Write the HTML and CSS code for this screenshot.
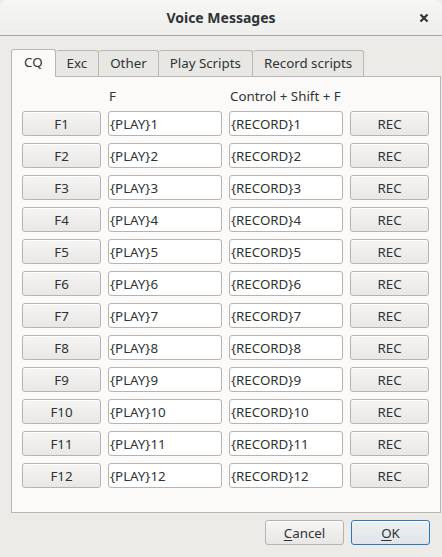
FILE: index.html
```html
<!DOCTYPE html>
<html>
<head>
<meta charset="utf-8">
<link rel="stylesheet" href="styles.css">
</head>
<body>
<div class="window">
  <div class="titlebar">
    <span class="title">Voice Messages</span>
    <svg class="close" width="10" height="10" viewBox="0 0 10 10"><path d="M1.5 1.5 L8.5 8.5 M8.5 1.5 L1.5 8.5" stroke="#2e3436" stroke-width="2.2" stroke-linecap="butt"/></svg>
  </div>
  <div class="content">
    <div class="tabs">
      <div class="tab active">CQ</div>
      <div class="tab">Exc</div>
      <div class="tab">Other</div>
      <div class="tab">Play Scripts</div>
      <div class="tab">Record scripts</div>
    </div>
    <div class="panel">
      <div class="grid">
        <div class="head"></div>
        <div class="head">F</div>
        <div class="head">Control + Shift + F</div>
        <div class="head"></div>

        <button class="btn">F1</button><div class="entry">{PLAY}1</div><div class="entry">{RECORD}1</div><button class="btn">REC</button>
        <button class="btn">F2</button><div class="entry">{PLAY}2</div><div class="entry">{RECORD}2</div><button class="btn">REC</button>
        <button class="btn">F3</button><div class="entry">{PLAY}3</div><div class="entry">{RECORD}3</div><button class="btn">REC</button>
        <button class="btn">F4</button><div class="entry">{PLAY}4</div><div class="entry">{RECORD}4</div><button class="btn">REC</button>
        <button class="btn">F5</button><div class="entry">{PLAY}5</div><div class="entry">{RECORD}5</div><button class="btn">REC</button>
        <button class="btn">F6</button><div class="entry">{PLAY}6</div><div class="entry">{RECORD}6</div><button class="btn">REC</button>
        <button class="btn">F7</button><div class="entry">{PLAY}7</div><div class="entry">{RECORD}7</div><button class="btn">REC</button>
        <button class="btn">F8</button><div class="entry">{PLAY}8</div><div class="entry">{RECORD}8</div><button class="btn">REC</button>
        <button class="btn">F9</button><div class="entry">{PLAY}9</div><div class="entry">{RECORD}9</div><button class="btn">REC</button>
        <button class="btn">F10</button><div class="entry">{PLAY}10</div><div class="entry">{RECORD}10</div><button class="btn">REC</button>
        <button class="btn">F11</button><div class="entry">{PLAY}11</div><div class="entry">{RECORD}11</div><button class="btn">REC</button>
        <button class="btn">F12</button><div class="entry">{PLAY}12</div><div class="entry">{RECORD}12</div><button class="btn">REC</button>
      </div>
    </div>
    <div class="actions">
      <button class="btn"><u>C</u>ancel</button>
      <button class="btn ok"><u>O</u>K</button>
    </div>
  </div>
</div>
</body>
</html>
```

FILE: styles.css
```css
* { box-sizing: border-box; }
html, body {
  margin: 0;
  padding: 0;
  background: #edebe8;
}
body {
  font-family: "Noto Sans", sans-serif;
  font-size: 13.33px;
  color: #2e3436;
  width: 442px;
  height: 557px;
  overflow: hidden;
}
.window {
  width: 442px;
  height: 557px;
  display: flex;
  flex-direction: column;
}
.titlebar {
  height: 36px;
  flex: none;
  background: linear-gradient(#f6f6f5, #eeeeed);
  border-bottom: 1px solid #a6a6a3;
  border-radius: 7px 7px 0 0;
  display: flex;
  align-items: center;
  justify-content: center;
  position: relative;
}
.title {
  font-weight: bold;
  font-size: 14px;
  color: #2e3436;
  margin-top: -1px;
}
.close {
  position: absolute;
  right: 13px;
  top: 13px;
}
.content {
  padding: 12px 2px 0 11px;
  display: flex;
  flex-direction: column;
}
.tabs {
  display: flex;
  align-items: flex-end;
  height: 28px;
}
.tab {
  height: 26px;
  padding: 0 11px;
  border: 1px solid #b9b7b3;
  border-bottom: none;
  border-left: none;
  border-radius: 3px 3px 0 0;
  background: #e8e7e4;
  display: flex;
  align-items: center;
  line-height: 1;
  padding-top: 1px;
}
.tab.active {
  height: 28px;
  background: #fcfaf8;
  border-left: 1px solid #b9b7b3;
  padding: 0 12px;
  padding-bottom: 1px;
  margin-bottom: -1px;
  position: relative;
  z-index: 1;
}
.panel {
  width: 430px;
  height: 437px;
  background: #fcfaf8;
  border: 1px solid #b9b7b3;
  padding: 12px 10px 0 10px;
}
.grid {
  display: grid;
  grid-template-columns: 79px 114px 114px 79px;
  grid-auto-rows: 25px;
  column-gap: 7px;
  row-gap: 7px;
  grid-template-rows: 15px;
}
.head {
  line-height: 15px;
  padding-left: 1px;
  white-space: nowrap;
}
.btn {
  font-family: "Noto Sans", sans-serif;
  font-size: 13.33px;
  color: #2e3436;
  height: 25px;
  border: 1px solid #b6b4b0;
  border-radius: 3px;
  background: linear-gradient(#f6f5f4, #e8e7e5);
  box-shadow: inset 0 1px #ffffff;
  padding: 0;
  display: flex;
  align-items: center;
  justify-content: center;
  margin: 0;
}
.entry {
  height: 25px;
  border: 1px solid #b6b4b0;
  border-radius: 3px;
  background: #ffffff;
  display: flex;
  align-items: center;
  padding-left: 1px;
  white-space: nowrap;
}
.actions {
  display: flex;
  justify-content: flex-end;
  gap: 7px;
  margin-top: 7px;
  padding-right: 10px;
}
.actions .btn {
  width: 79px;
}
.actions .ok {
  border-color: #2a76c6;
  background: linear-gradient(#edf0f2, #e0e5e9);
}
u { text-decoration: underline; text-underline-offset: 2px; }
```
